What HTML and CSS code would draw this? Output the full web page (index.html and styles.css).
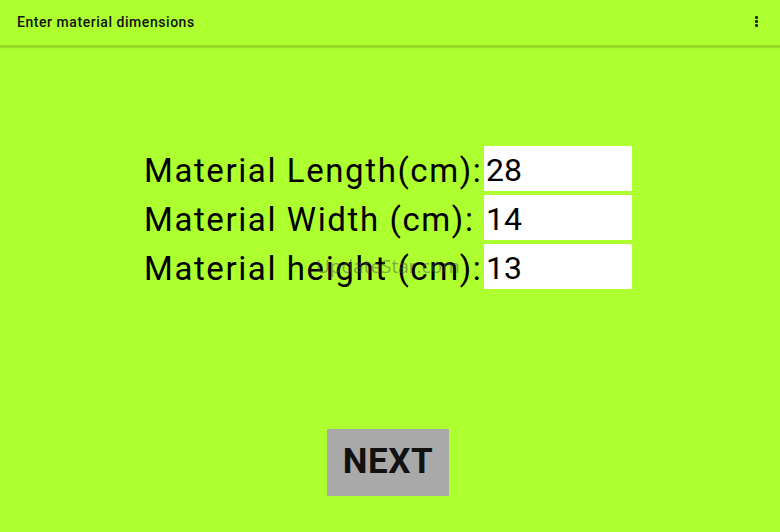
FILE: index.html
```html
<!DOCTYPE html>
<html lang="en">
<head>
<meta charset="utf-8">
<title>Enter material dimensions</title>
<link rel="stylesheet" href="styles.css">
</head>
<body>
  <header class="app-bar">
    <h1 class="app-title">Enter material dimensions</h1>
    <button class="overflow" aria-label="More options">
      <span class="dot"></span><span class="dot"></span><span class="dot"></span>
    </button>
  </header>

  <main class="content">
    <form class="dims">
      <label class="dim-label" for="len">Material Length(cm):</label>
      <input class="dim-input" id="len" type="text" value="28">
      <label class="dim-label" for="wid">Material Width (cm):</label>
      <input class="dim-input" id="wid" type="text" value="14">
      <label class="dim-label" for="hgt">Material height (cm):</label>
      <input class="dim-input" id="hgt" type="text" value="13">
    </form>
    <button class="next" type="button">NEXT</button>
    <div class="mark">UpdateStar.com</div>
  </main>
</body>
</html>
```

FILE: styles.css
```css
* { box-sizing: border-box; }

html, body {
  margin: 0;
  height: 100%;
}

body {
  background: #adff2f;
  font-family: Roboto, "Noto Sans", sans-serif;
  color: #000;
  overflow: hidden;
}

.app-bar {
  height: 47px;
  display: flex;
  align-items: center;
  justify-content: space-between;
  padding: 0 16px 0 17px;
  border-bottom: 2px solid #93d92a;
  box-shadow: 0 1px 1px rgba(110, 170, 20, 0.35);
}

.app-title {
  margin: 0 0 2px;
  font-size: 14px;
  font-weight: 500;
  letter-spacing: 0.55px;
  color: #111;
}

.overflow {
  border: 0;
  background: none;
  padding: 0;
  margin: 0 6px 2px 0;
  display: flex;
  flex-direction: column;
  gap: 1px;
}

.dot {
  width: 3px;
  height: 3px;
  background: #1a2a0a;
  border-radius: 1px;
}

.content {
  position: relative;
  display: flex;
  flex-direction: column;
  align-items: center;
  padding-top: 99px;
}

.dims {
  display: grid;
  grid-template-columns: 340px 148px;
  row-gap: 4px;
  margin-right: 4px;
}

.dim-label {
  height: 45px;
  line-height: 45px;
  font-size: 33px;
  letter-spacing: 1.6px;
  white-space: nowrap;
  padding-top: 2px;
}

.dim-input {
  height: 45px;
  width: 148px;
  border: 0;
  outline: none;
  background: #fff;
  font-family: inherit;
  font-size: 32px;
  padding: 3px 0 0 2px;
  color: #000;
}

.next {
  margin-top: 140px;
  margin-right: 4px;
  width: 122px;
  height: 67px;
  border: 0;
  background: #a9a9a9;
  font-family: inherit;
  font-size: 35px;
  font-weight: 700;
  letter-spacing: 0.5px;
  color: #111;
  padding: 0 0 2px;
}

.mark {
  position: absolute;
  left: 316px;
  top: 206px;
  font-family: "Open Sans", sans-serif;
  font-size: 19px;
  color: rgba(80, 80, 80, 0.5);
}
```
